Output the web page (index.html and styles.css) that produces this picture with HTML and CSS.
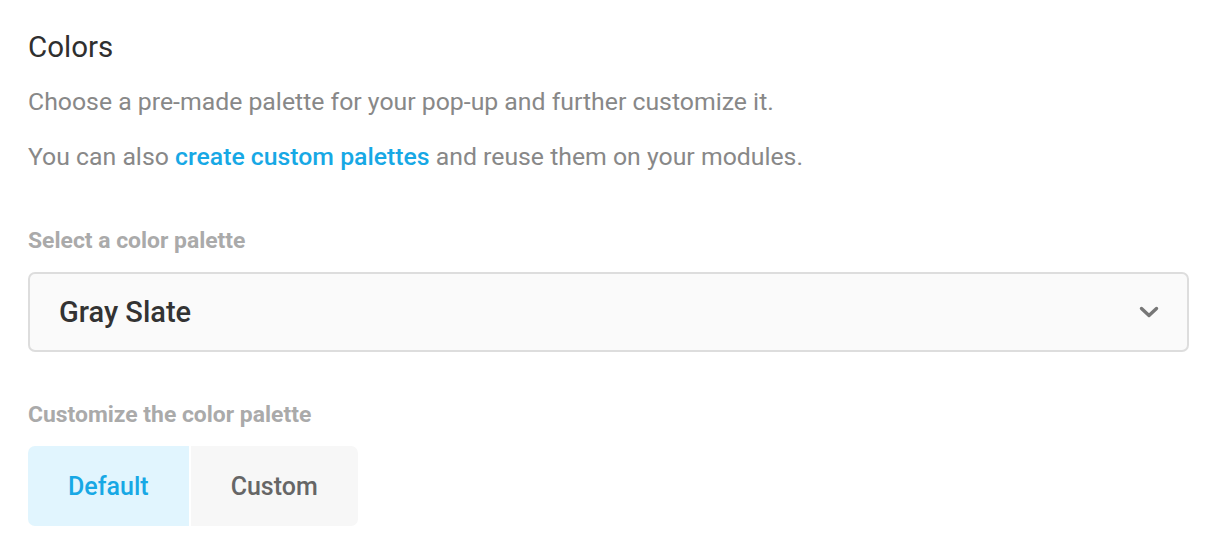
FILE: index.html
```html
<!DOCTYPE html>
<html>
<head>
<meta charset="utf-8">
<link rel="stylesheet" href="styles.css">
</head>
<body>
<div class="panel">
  <h2 class="title">Colors</h2>
  <p class="desc">Choose a pre-made palette for your pop-up and further customize it.</p>
  <p class="desc">You can also <a class="link" href="#">create custom palettes</a> and reuse them on your modules.</p>
  <div class="field">
    <label class="label">Select a color palette</label>
    <div class="select">
      <span class="select-value">Gray Slate</span>
      <svg class="chevron" width="20" height="12" viewBox="0 0 20 12"><path d="M2.5 2.5 L10 9.5 L17.5 2.5" fill="none" stroke="#777" stroke-width="3.4" stroke-linecap="round" stroke-linejoin="round"/></svg>
    </div>
  </div>
  <div class="field">
    <label class="label">Customize the color palette</label>
    <div class="tabs">
      <button class="tab tab-active">Default</button>
      <button class="tab">Custom</button>
    </div>
  </div>
</div>
</body>
</html>
```
FILE: styles.css
```css
* { box-sizing: border-box; }
body {
  margin: 0;
  background: #fff;
  font-family: Roboto, "Liberation Sans", sans-serif;
}
.panel {
  padding: 26px 31px 0 28px;
}
.title {
  margin: 0;
  font-size: 29.5px;
  font-weight: 400;
  color: #2f2f2f;
  line-height: 42px;
}
.desc {
  margin: 16px 0 0;
  font-size: 24.8px;
  line-height: 36px;
  color: #888;
}
.desc + .desc {
  margin-top: 19px;
}
.link {
  color: #17a8e5;
  text-decoration: none;
  font-weight: 500;
}
.field {
  margin-top: 51px;
}
.field + .field {
  margin-top: 48px;
}
.label {
  display: block;
  font-size: 22.9px;
  font-weight: 700;
  color: #aaa;
  line-height: 30px;
  margin-bottom: 16px;
}
.select {
  display: flex;
  align-items: center;
  justify-content: space-between;
  height: 80px;
  border: 2px solid #ddd;
  border-radius: 7px;
  background: #fafafa;
  padding: 0 28px 0 29px;
}
.select-value {
  font-size: 29px;
  font-weight: 500;
  color: #333;
}
.chevron { display: block; }
.tabs {
  display: flex;
  gap: 2px;
}
.tab {
  height: 80px;
  border: 0;
  padding: 0 40px;
  font-family: inherit;
  font-size: 25px;
  font-weight: 500;
  color: #666;
  background: #f7f7f7;
}
.tab:first-child { border-radius: 7px 0 0 7px; }
.tab:last-child { border-radius: 0 7px 7px 0; }
.tab-active {
  background: #e1f5fe;
  color: #17a8e5;
}
```
